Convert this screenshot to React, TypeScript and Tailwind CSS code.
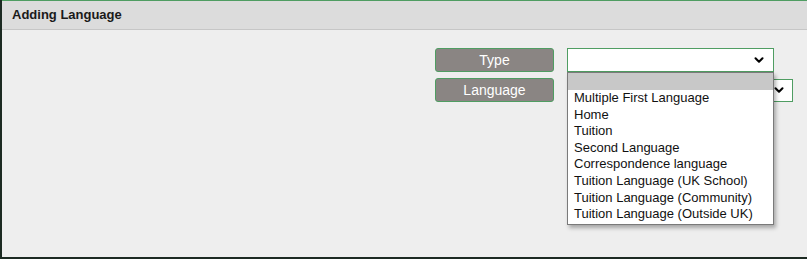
import { ChevronDown } from "lucide-react";

const options = [
  "Multiple First Language",
  "Home",
  "Tuition",
  "Second Language",
  "Correspondence language",
  "Tuition Language (UK School)",
  "Tuition Language (Community)",
  "Tuition Language (Outside UK)",
];

const Label = ({ text }: { text: string }) => (
  <div className="w-[119px] h-[24px] rounded-[3px] border border-[#4f9d62] bg-[#8a8583] text-white text-[14px] flex items-center justify-center">
    {text}
  </div>
);

const App = () => {
  return (
    <div className="w-[807px] h-[259px] bg-[#1c2a22] pl-[2px] pb-[2px] font-['Liberation_Sans',Arial,sans-serif]">
      <div className="h-full bg-[#eeeeee] border-t border-[#4f9d62] flex flex-col">
        {/* Header */}
        <div className="h-[29px] bg-[#dcdcdc] border-b border-[#c6c6c6] flex items-center pl-[10px]">
          <span className="text-[13px] font-bold text-[#1a1a1a]">Adding Language</span>
        </div>

        {/* Form */}
        <div className="pt-[18px] pl-[433px] flex flex-col gap-[6px]">
          <div className="flex items-center gap-[13px] relative">
            <Label text="Type" />
            <div className="relative">
              <div className="w-[207px] h-[24px] bg-white border border-[#4f9d62] flex items-center justify-end pr-[7px]">
                <ChevronDown className="w-[14px] h-[14px] text-black" strokeWidth={3.5} />
              </div>
              {/* Open dropdown */}
              <div className="absolute left-0 top-[24px] w-[207px] bg-white border border-[#7a7a7a] shadow-[2px_3px_4px_rgba(0,0,0,0.3)] z-10 text-[13px] text-[#111] pb-[1px]">
                <div className="h-[17px] bg-[#c8c8c8]" />
                {options.map((o) => (
                  <div key={o} className="h-[16.6px] leading-[16.6px] pl-[6px] whitespace-nowrap">
                    {o}
                  </div>
                ))}
              </div>
            </div>
          </div>
          <div className="flex items-center gap-[13px]">
            <Label text="Language" />
            <div className="w-[226px] h-[23px] bg-white border border-[#4f9d62] flex items-center justify-end pr-[6px]">
              <ChevronDown className="w-[14px] h-[14px] text-black" strokeWidth={3.5} />
            </div>
          </div>
        </div>
      </div>
    </div>
  );
};

export default App;
